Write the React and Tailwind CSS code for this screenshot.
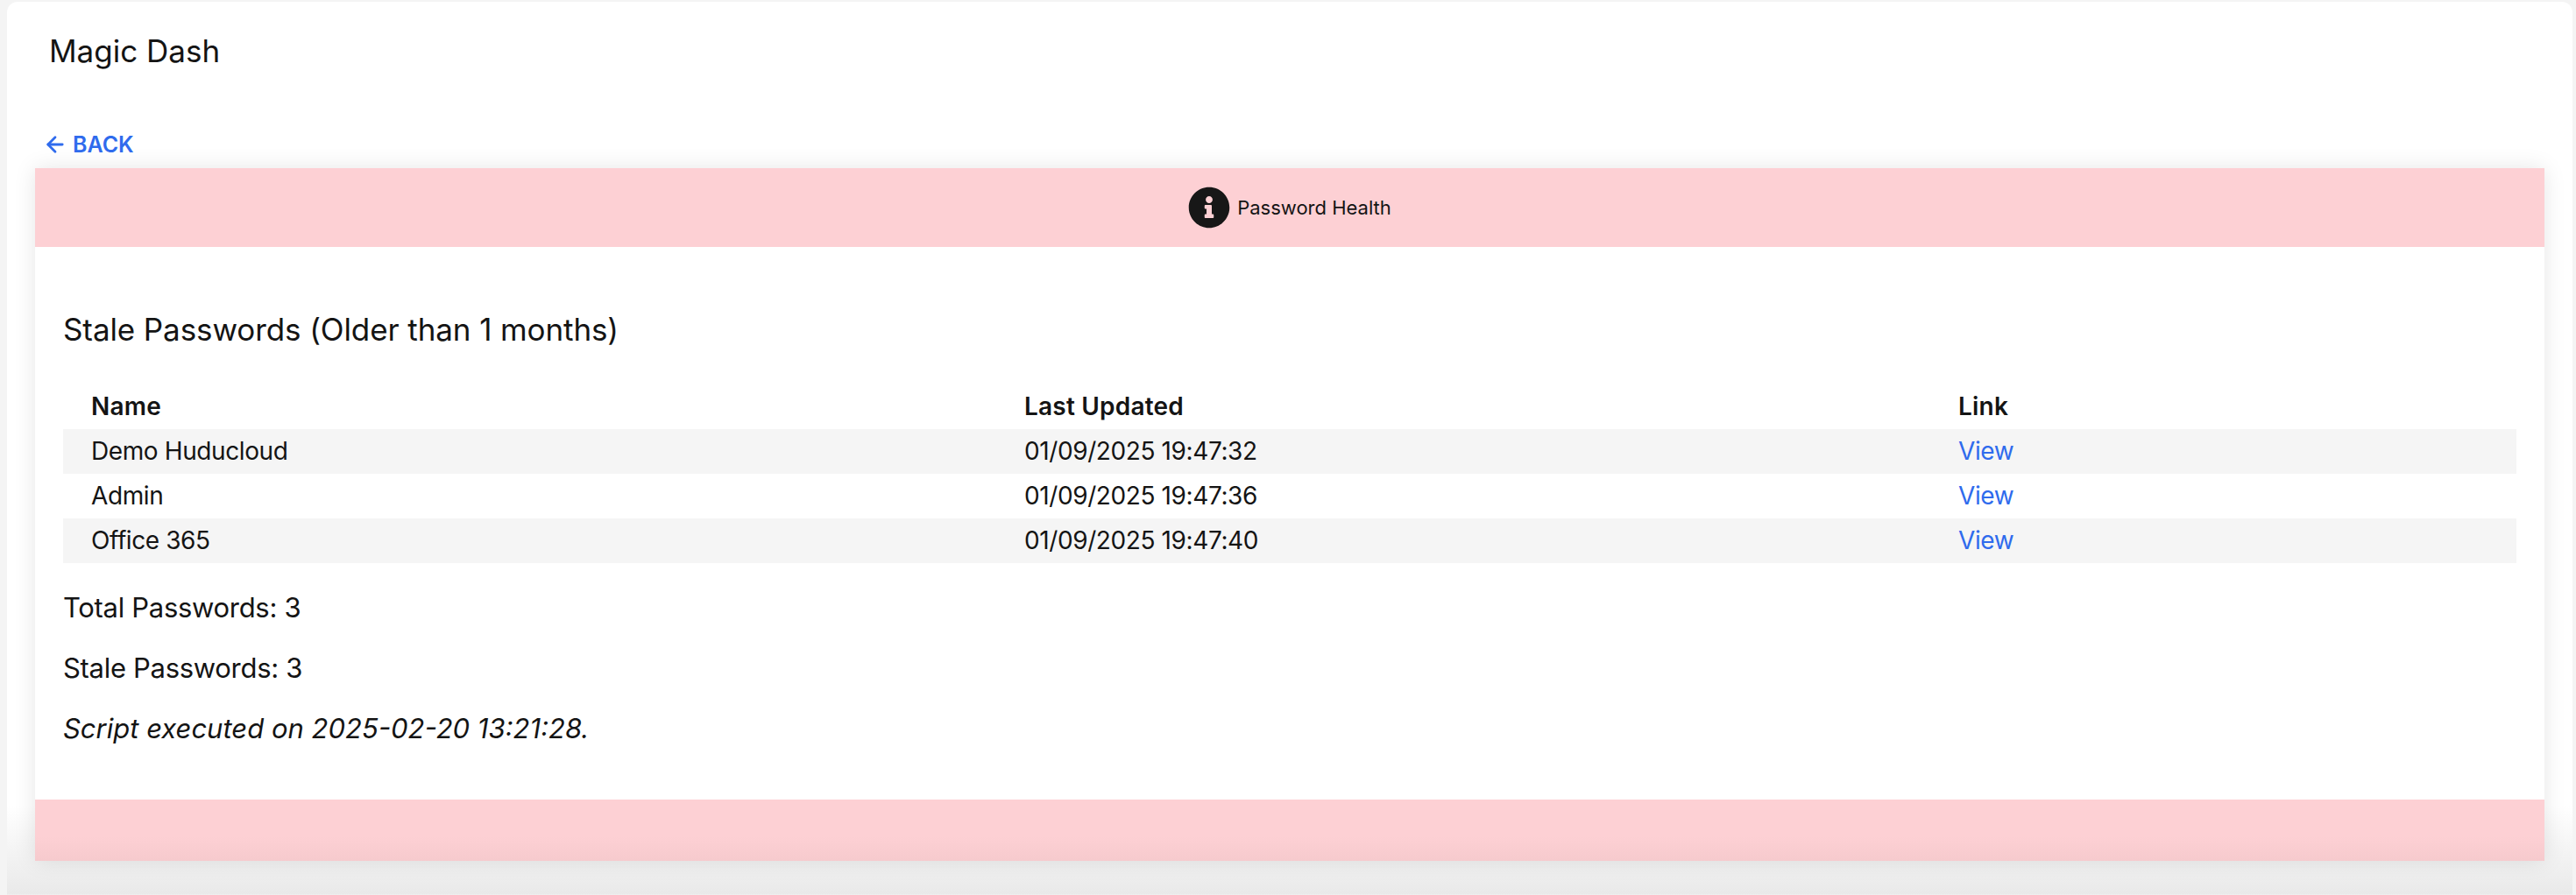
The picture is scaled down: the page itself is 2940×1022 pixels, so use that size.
import React from "react";
import { FaInfoCircle } from "react-icons/fa";
import { ArrowLeft } from "lucide-react";

const rows = [
  ["Demo Huducloud", "01/09/2025 19:47:32"],
  ["Admin", "01/09/2025 19:47:36"],
  ["Office 365", "01/09/2025 19:47:40"],
];

export default function App() {
  return (
    <div className="h-[1022px] overflow-hidden bg-[#f4f4f4] pl-2 pr-1 pt-[2px] font-['Inter',sans-serif] text-[#141414]">
      <div className="h-[1020px] rounded-t-xl bg-white bg-gradient-to-b from-white from-[90%] to-[#e9e9e9] px-8 shadow-[inset_0_-1px_0_#eee]">
        <div className="flex h-[112px] items-center pl-4 text-[35px] leading-none">Magic Dash</div>
        <a className="flex h-[78px] items-start gap-[6px] pl-[9px] pt-[35px] text-[25px] font-semibold leading-[32px] text-[#2f6bed]">
          <ArrowLeft className="mt-[2px] h-[28px] w-[28px]" strokeWidth={2.4} />
          BACK
        </a>
        <div className="shadow-[0_0_24px_rgba(0,0,0,0.10)]">
          <div className="flex h-[90px] items-center justify-center gap-2 bg-[#fdd0d4] text-[22px]">
            <FaInfoCircle className="h-12 w-12 text-[#171717]" />
            <span>Password Health</span>
          </div>
          <div className="h-[631px] bg-white px-8 pt-[72px]">
            <h2 className="text-[35px] leading-[44px] tracking-[-0.1px]">Stale Passwords (Older than 1 months)</h2>
            <div className="mt-[41px] text-[28px] leading-[51px] tracking-[-0.4px]">
              <div className="grid grid-cols-[1065px_1066px_1fr] px-8 font-semibold tracking-[0.2px]">
                <div>Name</div>
                <div>Last Updated</div>
                <div>Link</div>
              </div>
              {rows.map((r, i) => (
                <div key={r[0]} className={`grid grid-cols-[1065px_1066px_1fr] px-8 ${i % 2 === 0 ? "bg-[#f5f5f5]" : "bg-white"}`}>
                  <div>{r[0]}</div>
                  <div>{r[1]}</div>
                  <a className="text-[#2f6bed]">View</a>
                </div>
              ))}
            </div>
            <p className="mt-[31px] text-[31px] leading-[40px] tracking-[-0.3px]">Total Passwords: 3</p>
            <p className="mt-[29px] text-[31px] leading-[40px] tracking-[-0.3px]">Stale Passwords: 3</p>
            <p className="mt-[29px] text-[31px] italic leading-[40px]">Script executed on 2025-02-20 13:21:28.</p>
          </div>
          <div className="h-[70px] bg-gradient-to-b from-[#fdd0d4] from-[60%] to-[#f6cacd]" />
        </div>
      </div>
    </div>
  );
}
